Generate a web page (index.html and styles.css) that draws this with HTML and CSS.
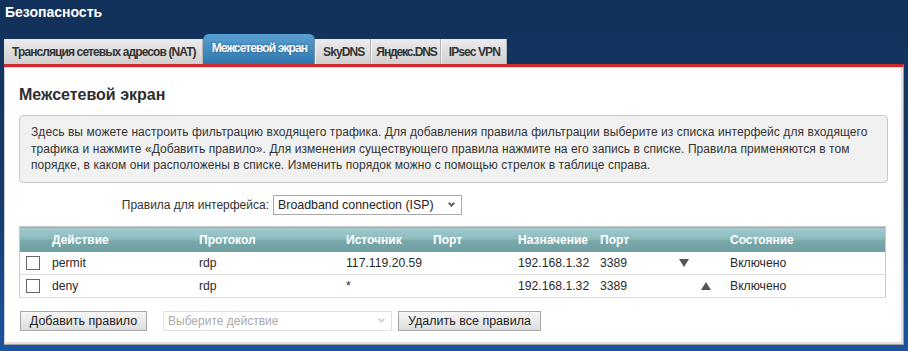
FILE: index.html
```html
<!doctype html>
<html>
<head>
<meta charset="utf-8">
<title>Безопасность</title>
<link rel="stylesheet" href="styles.css">
</head>
<body>
<div class="page">
	<div class="pageTitle">Безопасность</div>
	<ul class="tabs">
		<li>Трансляция сетевых адресов (NAT)</li>
		<li class="active">Межсетевой экран</li>
		<li>SkyDNS</li>
		<li class="narrow">Яндекс.DNS</li>
		<li>IPsec VPN</li>
	</ul>
	<div class="panel">
		<h2>Межсетевой экран</h2>
		<div class="info">
			Здесь вы можете настроить фильтрацию входящего трафика. Для добавления правила фильтрации выберите из списка интерфейс для входящего
			трафика и нажмите «Добавить правило». Для изменения существующего правила нажмите на его запись в списке. Правила применяются в том
			порядке, в каком они расположены в списке. Изменить порядок можно с помощью стрелок в таблице справа.
		</div>
		<div class="ifaceRow">
			<label class="ifaceLabel">Правила для интерфейса:</label>
			<div class="select">Broadband connection (ISP)<span class="caret"></span></div>
		</div>
		<table class="rules">
			<thead>
				<tr>
					<th class="cCheck"></th>
					<th class="cAction">Действие</th>
					<th class="cProto">Протокол</th>
					<th class="cSrc">Источник</th>
					<th class="cSport">Порт</th>
					<th class="cDst">Назначение</th>
					<th class="cDport">Порт</th>
					<th class="cDown"></th>
					<th class="cUp"></th>
					<th class="cState">Состояние</th>
				</tr>
			</thead>
			<tbody>
				<tr>
					<td><span class="check"></span></td>
					<td>permit</td>
					<td>rdp</td>
					<td>117.119.20.59</td>
					<td></td>
					<td>192.168.1.32</td>
					<td>3389</td>
					<td><span class="arrowDown"></span></td>
					<td></td>
					<td>Включено</td>
				</tr>
				<tr>
					<td><span class="check"></span></td>
					<td>deny</td>
					<td>rdp</td>
					<td>*</td>
					<td></td>
					<td>192.168.1.32</td>
					<td>3389</td>
					<td></td>
					<td><span class="arrowUp"></span></td>
					<td>Включено</td>
				</tr>
			</tbody>
		</table>
		<div class="actions">
			<button class="btn btnAdd">Добавить правило</button>
			<div class="select disabled">Выберите действие<span class="caret"></span></div>
			<button class="btn btnDel">Удалить все правила</button>
		</div>
	</div>
</div>
</body>
</html>
```

FILE: styles.css
```css
html, body{
	margin: 0;
	height: 100%;
}

body{
	background: linear-gradient(#12315a 0%, #143a68 55%, #1b54a0 100%);
	font-family: "Liberation Sans", Arial, sans-serif;
	font-size: 12px;
	color: #333333;
}

.page{
	display: flex;
	flex-direction: column;
	height: 351px;
}

.pageTitle{
	color: #ffffff;
	font-weight: bold;
	font-size: 14px;
	line-height: 16px;
	padding: 4px 0 0 5px;
	height: 15px;
}

.tabs{
	list-style: none;
	margin: 0;
	padding: 0 0 0 4px;
	display: flex;
	align-items: flex-end;
	height: 45px;
}

.tabs li{
	height: 25px;
	line-height: 26px;
	padding: 0 6px 0 7px;
	font-weight: bold;
	font-size: 12px;
	letter-spacing: -0.9px;
	color: #333333;
	background: linear-gradient(#ececec, #cfcfcf);
	border-right: 1px solid #b4b4b4;
	border-left: 1px solid #f4f4f4;
}

.tabs li:first-child{
	border-left: none;
	padding-left: 8px;
}

.tabs li.narrow{
	padding: 0 3px 0 4px;
	letter-spacing: -1.1px;
}

.tabs li.active{
	height: 30px;
	line-height: 28px;
	padding: 0 7px 0 9px;
	color: #ffffff;
	text-shadow: 0 0 2px #1b4a78;
	background: linear-gradient(#5aa0d2, #2f76ad);
	border-radius: 6px 6px 0 0;
	border-left: none;
	border-right: 1px solid #6a8fb0;
}

.panel{
	margin: 0 4px 6px 4px;
	flex: 1;
	background: #ffffff;
	border-top: 3px solid #cc2a2e;
	border-right: 1px solid #a0a0a0;
	border-bottom: 1px solid #a0a0a0;
	box-shadow: inset 0 1px 0 #d8dde4, inset -2px -2px 0 #e0e0e0, inset 1px 0 0 #c8ccd2;
	padding: 0 15px 0 15px;
}

h2{
	margin: 18px 0 11px 0;
	font-size: 16px;
	line-height: 19px;
	font-weight: bold;
	color: #2e2e2e;
}

.info{
	background: #f1f1f1;
	border: 1px solid #c8c8c8;
	border-radius: 4px;
	padding: 8px 11px 8px 11px;
	line-height: 16.7px;
	font-size: 12px;
	letter-spacing: 0.07px;
}

.ifaceRow{
	display: flex;
	align-items: center;
	margin-top: 11px;
	height: 21px;
}

.ifaceLabel{
	width: 250px;
	text-align: right;
	padding-right: 4px;
}

.select{
	position: relative;
	box-sizing: border-box;
	width: 189px;
	height: 20px;
	line-height: 18px;
	border: 1px solid #a9a9a9;
	background: #ffffff;
	padding-left: 4px;
	font-size: 12.4px;
	color: #222222;
}

.caret{
	position: absolute;
	right: 7px;
	top: 5px;
	width: 3px;
	height: 3px;
	border-right: 2px solid #666666;
	border-bottom: 2px solid #666666;
	transform: rotate(45deg);
}

.select.disabled{
	width: 229px;
	border-color: #e2e2e2;
	color: #aaaaaa;
	font-size: 12px;
}

.select.disabled .caret{
	border-color: #d4d4d4;
}

.rules{
	margin-top: 11px;
	width: 867px;
	border-collapse: collapse;
	table-layout: fixed;
	border: 1px solid #c8c8c8;
}

.rules th{
	height: 25px;
	padding: 0;
	text-align: left;
	color: #ffffff;
	font-weight: bold;
	font-size: 12px;
	background: linear-gradient(#a2cbce 0%, #8dbbbd 45%, #78a7a9 55%, #6f9fa1 100%);
}

.rules td{
	height: 22px;
	padding: 0;
	border-bottom: 1px solid #dcdcdc;
	font-size: 12.2px;
	color: #2a2a2a;
}

.cCheck{ width: 32px; }
.cAction{ width: 147px; }
.cProto{ width: 147px; }
.cSrc{ width: 87px; }
.cSport{ width: 85px; }
.cDst{ width: 82px; }
.cDport{ width: 72px; }
.cDown{ width: 28px; }
.cUp{ width: 30px; }

.check{
	display: block;
	width: 12px;
	height: 12px;
	margin-left: 6px;
	border: 1px solid #666666;
	background: #ffffff;
}

.arrowDown{
	display: block;
	width: 0;
	height: 0;
	margin-left: 7px;
	border-left: 5px solid transparent;
	border-right: 5px solid transparent;
	border-top: 8px solid #555555;
}

.arrowUp{
	display: block;
	width: 0;
	height: 0;
	margin-left: 1px;
	border-left: 5px solid transparent;
	border-right: 5px solid transparent;
	border-bottom: 8px solid #555555;
}

.actions{
	display: flex;
	align-items: center;
	gap: 6px;
	margin-top: 13px;
}

.btn{
	box-sizing: border-box;
	height: 20px;
	padding: 0;
	font-family: "Liberation Sans", Arial, sans-serif;
	font-size: 12.5px;
	color: #222222;
	background: linear-gradient(#f6f6f6, #dedede);
	border: 1px solid #a8a8a8;
	border-radius: 0;
}

.btnAdd{
	margin-left: 1px;
	margin-right: 10px;
	width: 127px;
}

.btnDel{
	width: 143px;
}
```
